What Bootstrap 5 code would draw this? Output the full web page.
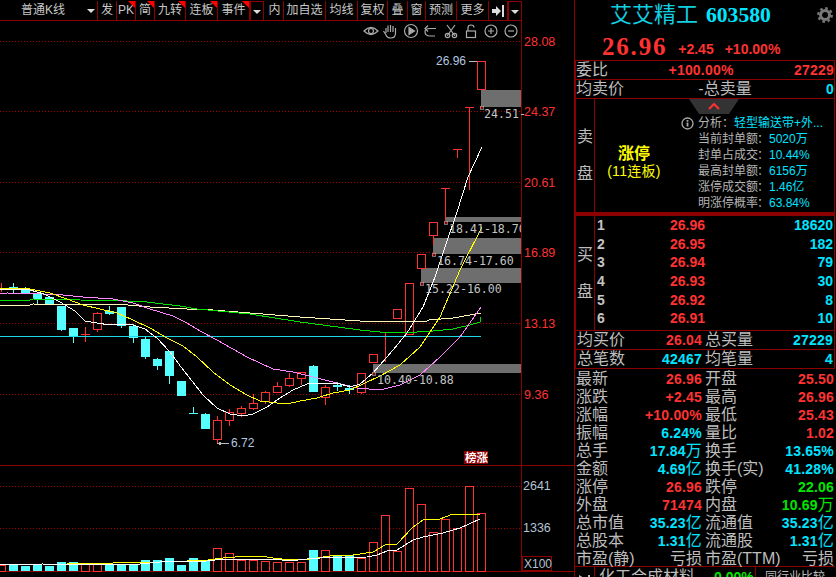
<!DOCTYPE html>
<html>
<head>
    <title>艾艾精工 603580</title>
    <link href="https://cdn.jsdelivr.net/npm/bootstrap@5.3.0/dist/css/bootstrap.min.css" rel="stylesheet">
    <script src="https://cdn.jsdelivr.net/npm/bootstrap@5.3.0/dist/js/bootstrap.bundle.min.js"></script>
    <style>
        html, body { background: #000; height: 577px; overflow: hidden; }
        body { font-family: "Liberation Sans", "Noto Sans CJK SC", sans-serif; color: #bdbdbd; }
        .screen { width: 836px; height: 577px; overflow: hidden; background: #000; }
        .chart-side { width: 575px; flex: none; border-right: 1px solid #8c0000; }
        .tool-strip { width: 522px; height: 21px; border-bottom: 1px solid #8c0000; padding-top: 1px; }
        .tool-item { position: relative; flex: none; height: 19px; border-right: 1px solid #8c0000; font: 12px/19px "Liberation Sans", "Noto Sans CJK SC", sans-serif; text-align: center; color: #c8c8c8; white-space: nowrap; }
        .tool-first { text-align: left; padding-left: 21px; }
        .tool-first .tool-caret { margin-left: 22px; }
        .tool-item.has-flag::after { content: ""; position: absolute; top: 0; right: 0; border-top: 7px solid #f00; border-left: 7px solid transparent; }
        .tool-caret { display: inline-block; border-top: 4px solid #ddd; border-left: 4px solid transparent; border-right: 4px solid transparent; vertical-align: middle; }
        .caret-box { border-left: 1px solid #8c0000; border-top: 1px solid #8c0000; }
        .chart-svg { display: block; width: 574px; height: 556px; }
        .chart-svg text { font-family: "Liberation Sans", sans-serif; }
        .quote-side { width: 261px; flex: none; }
        .title-row { height: 30px; padding-left: 35px; padding-right: 3px; }
        .title-name { font: 22px/30px "Liberation Sans", "Noto Sans CJK SC", sans-serif; color: #10cfe0; }
        .title-code { font: bold 21.6px/30px "Liberation Serif", serif; color: #00e6ff; margin-left: 8px; }
        .price-row { height: 30px; padding-left: 27px; padding-top: 2px; }
        .price-big { font: bold 25px/30px "Liberation Serif", serif; letter-spacing: 1.8px; color: #ff3232; }
        .price-sub { font: bold 14px/30px "Liberation Sans", sans-serif; color: #ff3232; margin-left: 11px; padding-top: 2px; }
        .quote-line { height: 19px; width: 260px; border: 1px solid #8c0000; border-bottom: 0; }
        .cjk-lbl { font: 16px/18px "Liberation Sans", "Noto Sans CJK SC", sans-serif; color: #bdbdbd; white-space: nowrap; }
        .num-val { font: bold 14px/18px "Liberation Sans", "Noto Sans CJK SC", sans-serif; white-space: nowrap; letter-spacing: .2px; }
        .num-val i { font: 16px/18px "Liberation Sans", "Noto Sans CJK SC", sans-serif; }
        .tone-up { color: #ff3232; }
        .tone-cyan { color: #00e4ff; }
        .tone-green { color: #00e600; }
        .half-cell { width: 129px; flex: none; padding: 0 2px 0 1px; }
        .half-cell.in-box { width: 128px; }
        .half-rest { flex: 1 1 auto; padding: 0 1px 0 1px; }
        .sell-box { position: relative; height: 117px; width: 260px; border: 1px solid #8c0000; border-bottom: 3px solid #8c0000; }
        .side-col { width: 19px; flex: none; border-right: 1px solid #8c0000; gap: 21px; font: 16px/16px "Liberation Sans", "Noto Sans CJK SC", sans-serif; }
        .limit-block { width: 78px; flex: none; color: #ff0; padding-top: 46px; }
        .limit-main { font: bold 16px/17px "Liberation Sans", "Noto Sans CJK SC", sans-serif; }
        .limit-sub { font: 14px/18px "Liberation Sans", "Noto Sans CJK SC", sans-serif; letter-spacing: .3px; }
        .info-block { padding: 16px 0 0 8px; }
        .info-dot { flex: none; margin: 2px 4px 0 0; }
        .info-line { font: 12px/16px "Liberation Sans", "Noto Sans CJK SC", sans-serif; white-space: nowrap; color: #b4b4b4; }
        .info-line b { font-weight: 400; color: #00e4ff; }
        .info-tag { width: 59px; display: inline-block; }
        .fold-tab { position: absolute; top: 0; left: 113px; width: 50px; height: 15px; background: #333; clip-path: polygon(0 0, 100% 0, 80% 100%, 20% 100%); }
        .fold-tab svg { margin-top: 3px; }
        .buy-box { height: 115px; width: 260px; border: 1px solid #8c0000; border-bottom: 0; }
        .buy-row { height: 18.7px; line-height: 18.7px; }
        .buy-no { width: 22px; padding-left: 2px; font: bold 14px/18.7px "Liberation Sans", sans-serif; color: #c4c4c4; }
        .buy-price { width: 88px; text-align: right; font: bold 14px/18.7px "Liberation Sans", sans-serif; color: #ff3232; }
        .buy-vol { flex: 1 1 auto; text-align: right; font: bold 14px/18.7px "Liberation Sans", sans-serif; color: #00e4ff; padding-right: 1px; }
        .stat-list { height: 199px; width: 260px; border-top: 1px solid #8c0000; border-bottom: 1px solid #8c0000; padding-top: 1px; }
        .stat-row { height: 18px; }
        .foot-row { height: 20px; width: 260px; font: 16px/20px "Liberation Sans", "Noto Sans CJK SC", sans-serif; }
        .foot-arrow { width: 20px; border-right: 1px solid #8c0000; flex: none; }
        .foot-arrow svg { margin-top: 3px; }
        .foot-name { width: 161px; padding-left: 4px; border-right: 1px solid #8c0000; flex: none; }
        .foot-pct { font: bold 14px/20px "Liberation Sans", sans-serif; margin-left: 19px; }
        .foot-cmp { font-size: 12px; padding-left: 9px; }
    </style>
</head>
<body>
<div class="screen d-flex">
    <!-- K line side -->
    <div class="chart-side">
        <div class="tool-strip d-flex" id="toolStrip"></div>
        <svg class="chart-svg" id="kChart" viewBox="0 21 574 556" shape-rendering="crispEdges"></svg>
    </div>

    <!-- quote side -->
    <div class="quote-side">
        <div class="title-row d-flex align-items-center">
            <span class="title-name">艾艾精工</span><span class="title-code">603580</span>
            <svg class="ms-auto" width="16" height="16" viewBox="0 0 16 16">
                <circle cx="8" cy="8" r="4.5" fill="none" stroke="#777" stroke-width="3"/>
                <circle cx="8" cy="8" r="6.7" fill="none" stroke="#777" stroke-width="2.4" stroke-dasharray="2.6 2.66"/>
            </svg>
        </div>
        <div class="price-row d-flex">
            <span class="price-big">26.96</span>
            <span class="price-sub">+2.45</span>
            <span class="price-sub">+10.00%</span>
        </div>
        <div class="quote-line d-flex justify-content-between">
            <span class="cjk-lbl">委比</span>
            <span class="num-val tone-up">+100.00%</span>
            <span class="num-val tone-up">27229</span>
        </div>
        <div class="quote-line d-flex">
            <span class="cjk-lbl">均卖价</span>
            <span class="cjk-lbl ms-auto">-总卖量</span>
            <span class="num-val tone-cyan ms-auto">0</span>
        </div>
        <div class="sell-box d-flex">
            <div class="side-col d-flex flex-column justify-content-center align-items-center"><span>卖</span><span>盘</span></div>
            <div class="limit-block text-center">
                <div class="limit-main">涨停</div>
                <div class="limit-sub">(11连板)</div>
            </div>
            <div class="info-block d-flex">
                <svg class="info-dot" width="13" height="13" viewBox="0 0 13 13">
                    <circle cx="6.5" cy="6.5" r="5.5" fill="none" stroke="#aaa" stroke-width="1.3"/>
                    <rect x="5.6" y="5.5" width="1.8" height="4" fill="#aaa"/>
                    <rect x="5.6" y="3" width="1.8" height="1.7" fill="#aaa"/>
                </svg>
                <div>
                    <div class="info-line">分析：<b>轻型输送带+外...</b></div>
                    <div class="info-line"><span class="info-tag">当前封单额</span>：<b>5020万</b></div>
                    <div class="info-line"><span class="info-tag">封单占成交</span>：<b>10.44%</b></div>
                    <div class="info-line"><span class="info-tag">最高封单额</span>：<b>6156万</b></div>
                    <div class="info-line"><span class="info-tag">涨停成交额</span>：<b>1.46亿</b></div>
                    <div class="info-line"><span class="info-tag">明涨停概率</span>：<b>63.84%</b></div>
                </div>
            </div>
            <div class="fold-tab d-flex justify-content-center">
                <svg width="12" height="8" viewBox="0 0 12 8"><path d="M1 7 L6 2 L11 7" fill="none" stroke="#ff3232" stroke-width="2"/></svg>
            </div>
        </div>
        <div class="buy-box d-flex">
            <div class="side-col d-flex flex-column justify-content-center align-items-center"><span>买</span><span>盘</span></div>
            <div class="flex-grow-1" id="buyRows"></div>
        </div>
        <div class="quote-line d-flex">
            <div class="half-cell in-box d-flex justify-content-between"><span class="cjk-lbl">均买价</span><span class="num-val tone-up">26.04</span></div>
            <div class="half-rest d-flex justify-content-between"><span class="cjk-lbl">总买量</span><span class="num-val tone-cyan">27229</span></div>
        </div>
        <div class="quote-line d-flex">
            <div class="half-cell in-box d-flex justify-content-between"><span class="cjk-lbl">总笔数</span><span class="num-val tone-cyan">42467</span></div>
            <div class="half-rest d-flex justify-content-between"><span class="cjk-lbl">均笔量</span><span class="num-val tone-cyan">4</span></div>
        </div>
        <div class="stat-list" id="statList"></div>
        <div class="foot-row d-flex">
            <div class="foot-arrow text-center">
                <svg width="14" height="10" viewBox="0 0 14 10"><path d="M1 1 L8 5 L1 9 Z M10 1 H12 V9 H10 Z" fill="#bbb"/></svg>
            </div>
            <div class="foot-name d-flex"><span>化工合成材料</span><span class="foot-pct tone-green">0.00%</span></div>
            <div class="foot-cmp">同行业比较</div>
        </div>
    </div>
</div>

<script>
    // toolbar: label, width, flagged, kind
    const tools = [
        ["普通K线", 98, 0, "caret"], ["发", 19, 0], ["PK", 19, 1], ["简", 19, 1], ["九转", 31, 1], ["连板", 32, 1],
        ["事件", 32, 1], ["", 14, 0, "box"], ["", 2, 0, "gap"], ["内", 18, 0], ["加自选", 42, 0], ["均线", 32, 0], ["复权", 30, 0],
        ["叠", 20, 0], ["窗", 18, 0], ["预测", 31, 0], ["更多", 32, 0], ["", 19, 0, "arrow"], ["", 14, 0, "box"]
    ];
    const strip = document.getElementById("toolStrip");
    tools.forEach((t) => {
        const el = document.createElement("div");
        el.className = "tool-item" + (t[2] ? " has-flag" : "") + (t[3] === "box" ? " caret-box" : "") + (t[3] === "caret" ? " tool-first" : "");
        el.style.width = t[1] + "px";
        if (t[3] === "gap") el.style.borderRight = "0";
        if (t[3] === "caret") {
            el.innerHTML = t[0] + '<span class="tool-caret"></span>';
        } else if (t[3] === "box") {
            el.innerHTML = '<span class="tool-caret"></span>';
        } else if (t[3] === "arrow") {
            el.innerHTML = '<svg width="14" height="12" viewBox="0 0 14 12"><path d="M1 4 H5 V1 L10 6 L5 11 V8 H1 Z M11 0 H13 V12 H11 Z" fill="#ddd"/></svg>';
        } else {
            el.textContent = t[0];
        }
        strip.appendChild(el);
    });

    // buy levels
    const buys = [["1", "26.96", "18620"], ["2", "26.95", "182"], ["3", "26.94", "79"], ["4", "26.93", "30"], ["5", "26.92", "8"], ["6", "26.91", "10"]];
    document.getElementById("buyRows").innerHTML = buys.map((b) =>
        `<div class="buy-row d-flex"><span class="buy-no">${b[0]}</span><span class="buy-price">${b[1]}</span><span class="buy-vol">${b[2]}</span></div>`
    ).join("");

    // stat rows: label, value, tone, label, value, tone
    const stats = [
        ["最新", "26.96", "up", "开盘", "25.50", "up"],
        ["涨跌", "+2.45", "up", "最高", "26.96", "up"],
        ["涨幅", "+10.00%", "up", "最低", "25.43", "up"],
        ["振幅", "6.24%", "cyan", "量比", "1.02", "up"],
        ["总手", "17.84<i>万</i>", "cyan", "换手", "13.65%", "cyan"],
        ["金额", "4.69<i>亿</i>", "cyan", "换手(实)", "41.28%", "cyan"],
        ["涨停", "26.96", "up", "跌停", "22.06", "green"],
        ["外盘", "71474", "up", "内盘", "10.69<i>万</i>", "green"],
        ["总市值", "35.23<i>亿</i>", "cyan", "流通值", "35.23<i>亿</i>", "cyan"],
        ["总股本", "1.31<i>亿</i>", "cyan", "流通股", "1.31<i>亿</i>", "cyan"],
        ["市盈(静)", "亏损", "", "市盈(TTM)", "亏损", ""]
    ];
    document.getElementById("statList").innerHTML = stats.map((s) => {
        const val = (v, tone) => tone ? `<span class="num-val tone-${tone}">${v}</span>` : `<span class="cjk-lbl">${v}</span>`;
        return `<div class="stat-row d-flex">
            <div class="half-cell d-flex justify-content-between"><span class="cjk-lbl">${s[0]}</span>${val(s[1], s[2])}</div>
            <div class="half-rest d-flex justify-content-between"><span class="cjk-lbl">${s[3]}</span>${val(s[4], s[5])}</div>
        </div>`;
    }).join("");

    // K chart
    const RED = "#ff3232", CYAN = "#55ffff", GRID = "#a00000", AXIS = "#8c0000", GAP = "#6e6e6e";
    let svg = "";
    const line = (x1, y1, x2, y2, c, extra) => { svg += `<line x1="${x1}" y1="${y1}" x2="${x2}" y2="${y2}" stroke="${c}" ${extra || ""}/>`; };
    const poly = (pts, c) => { svg += `<polyline points="${pts.map((p) => p.join(",")).join(" ")}" fill="none" stroke="${c}" stroke-width="1"/>`; };
    const label = (x, y, t, c, size, extra) => { svg += `<text x="${x}" y="${y}" fill="${c}" font-size="${size}" shape-rendering="auto" ${extra || ""}>${t}</text>`; };

    [41.5, 111.5, 182.5, 252.5, 323.5, 394.5, 486.5, 528.5].forEach((y) => line(0, y, 521, y, GRID, 'stroke-dasharray="1 2"'));
    line(0, 465.5, 574, 465.5, AXIS);
    line(0, 571.5, 574, 571.5, AXIS);
    line(521.5, 21, 521.5, 571, AXIS);

    // price gaps
    [[481, 90, 107], [445, 217, 222], [433, 238, 254], [421, 268, 283], [373, 364, 373]].forEach((g) => {
        svg += `<rect x="${g[0]}" y="${g[1]}" width="${521 - g[0]}" height="${g[2] - g[1]}" fill="${GAP}"/>`;
    });

    // x, red?, body top, body bottom, high, low
    const candles = [
        [1, 1, 288, 288, 283, 292], [13, 0, 287, 290, 283, 293], [25, 0, 289, 293, 287, 293], [37, 0, 293, 299, 293, 305],
        [49, 0, 297, 304, 297, 304], [61, 0, 306, 330, 306, 331], [73, 0, 328, 336, 328, 343], [85, 1, 334, 334, 327, 342],
        [97, 1, 313, 329, 312, 332], [109, 0, 311, 314, 306, 315], [121, 0, 307, 326, 307, 328], [133, 0, 326, 338, 324, 343],
        [145, 0, 339, 357, 337, 359], [157, 0, 359, 366, 358, 370], [169, 0, 351, 376, 351, 384], [181, 0, 381, 396, 381, 396],
        [193, 0, 413, 413, 407, 413], [205, 0, 414, 429, 413, 429], [217, 1, 420, 439, 416, 443], [229, 1, 412, 420, 409, 426],
        [241, 1, 408, 413, 406, 417], [253, 1, 403, 408, 394, 410], [265, 1, 392, 401, 391, 404], [277, 1, 386, 392, 382, 393],
        [289, 1, 378, 385, 373, 387], [301, 1, 372, 378, 372, 385], [313, 0, 366, 392, 365, 392], [325, 1, 387, 397, 385, 405],
        [337, 0, 385, 387, 382, 391], [349, 0, 388, 390, 385, 394], [361, 1, 373, 392, 373, 394], [373, 1, 354, 362, 354, 362],
        [385, 1, 332, 332, 332, 362], [397, 1, 309, 318, 309, 318], [409, 1, 283, 334, 283, 334], [421, 1, 254, 268, 254, 268],
        [433, 1, 222, 235, 222, 245], [445, 1, 188, 188, 188, 220], [457, 1, 149, 149, 149, 158], [469, 1, 107, 107, 107, 190],
        [481, 1, 61, 89, 61, 89]
    ];
    candles.forEach((k) => {
        const c = k[1] ? RED : CYAN, x = k[0];
        line(x + 0.5, k[4], x + 0.5, k[5], c);
        if (k[2] === k[3]) {
            svg += `<rect x="${x - 4}" y="${k[2]}" width="9" height="1" fill="${c}"/>`;
        } else if (k[1]) {
            svg += `<rect x="${x - 3.5}" y="${k[2] + 0.5}" width="8" height="${k[3] - k[2]}" fill="#000" stroke="${c}"/>`;
        } else {
            svg += `<rect x="${x - 4}" y="${k[2]}" width="9" height="${k[3] - k[2]}" fill="${c}"/>`;
        }
    });

    // moving averages
    line(0, 336.5, 481, 336.5, "#1cd8e6");
    poly([[0,305],[30,305],[33,304],[128,305],[150,307],[187,309],[200,309],[250,313],[300,317],[360,321],[427,321],[429,320],[453,318],[470,315],[481,313]], "#fff6b8");
    poly([[0,301],[7,300],[30,300],[33,299],[127,301],[147,302],[163,304],[180,306],[197,309],[250,314],[300,322],[360,330],[380,332],[417,332],[433,331],[453,329],[470,325],[480,322],[481,317]], "#00e000");
    poly([[0,294],[7,293],[43,294],[63,295],[83,297],[113,299],[133,303],[150,309],[173,316],[187,323],[200,331],[217,340],[247,357],[273,369],[293,372],[313,377],[337,383],[357,388],[380,390],[400,385],[420,375],[440,357],[460,337],[481,307]], "#ff88ff");
    poly([[0,288],[30,289],[50,293],[67,299],[83,305],[100,309],[117,313],[133,320],[150,328],[167,338],[183,346],[197,357],[213,372],[230,385],[247,395],[260,401],[277,403],[287,404],[300,401],[317,398],[333,393],[350,390],[363,384],[380,376],[400,365],[420,347],[440,317],[460,270],[482,227]], "#ffff00");
    poly([[0,289],[30,290],[44,294],[60,302],[75,311],[85,321],[97,323],[110,325],[120,324],[133,325],[145,329],[157,338],[170,352],[181,367],[203,395],[217,408],[230,414],[243,416],[253,414],[267,407],[280,398],[293,390],[307,384],[320,383],[337,383],[350,387],[360,384],[373,373],[393,350],[407,333],[423,307],[435,277],[445,247],[457,212],[468,177],[482,147]], "#ffffff");

    // gap start dots
    [[481, 107], [445, 222], [433, 254], [421, 283], [373, 373]].forEach((d) => {
        svg += `<rect x="${d[0] - 1}" y="${d[1] - 1}" width="3" height="3" fill="#8c0000" stroke="#ddd" stroke-width="0.5"/>`;
    });

    // volume
    const vols = [[1,1,565],[13,0,564],[25,0,566],[37,0,565],[49,0,566],[61,0,562],[73,0,562],[85,1,563],[97,1,564],[109,0,564],[121,0,565],[133,0,565],[145,0,560],[157,0,560],[169,0,558],[181,0,565],[193,0,558],[205,0,560],[217,1,548],[229,1,553],[241,1,560],[253,1,560],[265,1,561],[277,1,562],[289,1,562],[301,1,562],[313,0,550],[325,1,550],[337,0,555],[349,0,555],[361,1,558],[373,1,542],[385,1,515],[397,1,551],[409,1,488],[421,1,504],[433,1,532],[445,1,519],[457,1,528],[469,1,486],[481,1,513]];
    vols.forEach((v) => {
        if (v[1]) svg += `<rect x="${v[0] - 3.5}" y="${v[2] + 0.5}" width="8" height="${571 - v[2]}" fill="#000" stroke="${RED}"/>`;
        else svg += `<rect x="${v[0] - 4}" y="${v[2]}" width="9" height="${571 - v[2]}" fill="${CYAN}"/>`;
    });
    poly([[55,565],[80,563],[113,563],[160,562],[187,561],[208,560],[223,558],[235,557],[260,556],[273,558],[290,560],[310,559],[330,556],[353,555],[373,552],[385,545],[397,544],[413,527],[423,520],[440,519],[453,514],[480,515]], "#ffff00");
    poly([[0,565],[43,564],[57,565],[80,564],[140,564],[160,562],[207,561],[223,559],[247,559],[273,559],[290,561],[307,559],[320,558],[367,557],[377,555],[387,551],[397,550],[413,540],[423,537],[443,533],[460,528],[480,519]], "#ffffff");

    // labels
    [[41, "28.08"], [111, "24.37"], [182, "20.61"], [252, "16.89"], [323, "13.13"], [394, "9.36"]].forEach((a) => label(524, a[0] + 5, a[1], RED, 12.5));
    label(523, 490, "2641", "#b4c4d4", 12.5);
    label(523, 532, "1336", "#b4c4d4", 12.5);
    svg += `<rect x="522.5" y="556.5" width="29" height="14" fill="#000" stroke="${AXIS}"/>`;
    label(524, 568, "X100", "#b4c4d4", 12);
    label(436, 65, "26.96", "#b4c8e0", 12);
    line(469, 61.5, 477, 61.5, "#bbb");
    label(231, 447, "6.72", "#b4c8e0", 12);
    line(217, 443.5, 229, 443.5, "#bbb");
    svg += `<path d="M217 443.5 L221 441.5 L221 445.5 Z" fill="#bbb"/>`;
    const mono = 'style="font-family: \'DejaVu Sans Mono\', monospace"';
    label(484, 118, "24.51-", "#c4c4c4", 11.6, mono);
    svg += `<svg x="0" y="21" width="521" height="556" viewBox="0 21 521 556">`;
    label(449, 233, "18.41-18.70", "#c4c4c4", 11.6, mono);
    label(437, 265, "16.74-17.60", "#c4c4c4", 11.6, mono);
    label(425, 293, "15.22-16.00", "#c4c4c4", 11.6, mono);
    label(377, 384, "10.40-10.88", "#c4c4c4", 11.6, mono);
    svg += `</svg>`;
    svg += `<rect x="464" y="451" width="24" height="13" fill="#8b0000"/>`;
    svg += `<text x="465" y="462" fill="#fff" font-size="11.5" font-weight="700" shape-rendering="auto" style="font-family: 'Noto Sans CJK SC', sans-serif">榜涨</text>`;

    // small tool icons above the axis
    svg += `<g fill="none" stroke="#aaa" stroke-width="1.2" shape-rendering="auto">
        <path d="M364 31 Q371 24 378 31 Q371 38 364 31 Z"/><circle cx="371" cy="31" r="2.5"/>
        <path d="M386 33 L386 28 M388 32 L388 25.5 M390.5 32 L390.5 25 M393 32 L393 26 M395.5 33 L395.5 28 M395.5 33 Q395.5 38 391 38 Q387 38 386 35 L383.5 31"/>
        <circle cx="411" cy="31" r="6.5"/><path d="M409 27.5 L414.5 31 L409 34.5 Z" fill="#aaa"/>
        <path d="M435 36 L430 36 Q425 36 425 31.5 Q425 28.5 430 28.5 L436 28.5 M428 25.5 L425 28.5 L428 31.5"/>
        <path d="M447 25 L455 36 M455 25 L447 36"/><circle cx="447.5" cy="35.5" r="2.2"/><circle cx="454.5" cy="35.5" r="2.2"/>
        <rect x="466.5" y="31" width="9" height="6.5"/><path d="M468 31 V27.5 Q468 25 471 25 Q474 25 474 27.5"/>
        <circle cx="491" cy="31" r="6"/><path d="M488 31 H494 M491 28 V34"/>
        <circle cx="511" cy="31" r="6"/><path d="M508 31 H514"/>
    </g>`;

    document.getElementById("kChart").innerHTML = svg;
</script>
</body>
</html>
